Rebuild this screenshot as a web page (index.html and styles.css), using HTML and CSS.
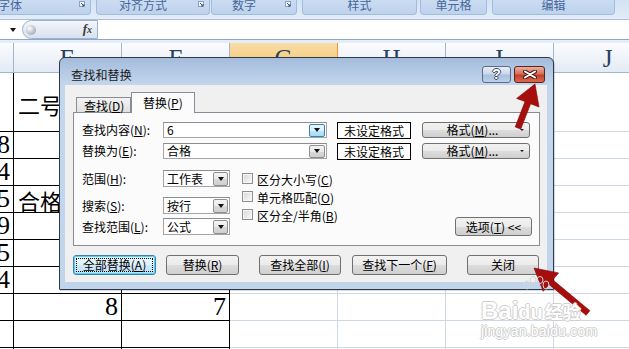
FILE: index.html
```html
<!DOCTYPE html>
<html lang="zh-CN">
<head>
    <meta charset="UTF-8">
    <meta name="viewport" content="width=device-width, initial-scale=1.0">
    <title>查找和替换</title>
    <link rel="stylesheet" href="styles.css">
</head>
<body>
    <!-- Ribbon group captions -->
    <div class="ribbon">
        <div class="group g1"><span class="glabel">字体</span><span class="launch"><svg width="6" height="6" viewBox="0 0 6 6"><rect x="0.5" y="0.5" width="5" height="5" fill="#eef4fb" stroke="#8aa3c4"/><path d="M2 2 L5 5 M5 3 V5 H3" stroke="#3d5a80" fill="none"/></svg></span></div>
        <div class="group g2"><span class="glabel">对齐方式</span><span class="launch"><svg width="6" height="6" viewBox="0 0 6 6"><rect x="0.5" y="0.5" width="5" height="5" fill="#eef4fb" stroke="#8aa3c4"/><path d="M2 2 L5 5 M5 3 V5 H3" stroke="#3d5a80" fill="none"/></svg></span></div>
        <div class="group g3"><span class="glabel">数字</span><span class="launch"><svg width="6" height="6" viewBox="0 0 6 6"><rect x="0.5" y="0.5" width="5" height="5" fill="#eef4fb" stroke="#8aa3c4"/><path d="M2 2 L5 5 M5 3 V5 H3" stroke="#3d5a80" fill="none"/></svg></span></div>
        <div class="group g4"><span class="glabel">样式</span></div>
        <div class="group g5"><span class="glabel">单元格</span></div>
        <div class="group g6"><span class="glabel">编辑</span></div>
    </div>

    <!-- Formula bar -->
    <div class="fbar">
        <div class="namebox"><span class="nb-arrow"></span></div>
        <div class="fxpill"><span class="ball"></span><span class="fx">f<i>x</i></span></div>
        <div class="finput"></div>
    </div>
    <div class="fgap"></div>

    <!-- Worksheet -->
    <table class="sheet">
        <colgroup>
            <col><col><col><col><col><col><col>
        </colgroup>
        <tr class="hdr">
            <th></th><th>E</th><th>F</th><th class="sel">G</th><th>H</th><th>I</th><th>J</th>
        </tr>
        <tr class="tall">
            <td class="k"></td><td class="k txt top">二号</td><td class="k"></td><td></td><td></td><td></td><td></td>
        </tr>
        <tr><td class="k num">8</td><td class="k"></td><td class="k"></td><td></td><td></td><td></td><td></td></tr>
        <tr><td class="k num">4</td><td class="k"></td><td class="k"></td><td></td><td></td><td></td><td></td></tr>
        <tr><td class="k num">5</td><td class="k txt">合格</td><td class="k"></td><td></td><td></td><td></td><td></td></tr>
        <tr><td class="k num">9</td><td class="k"></td><td class="k"></td><td></td><td></td><td></td><td></td></tr>
        <tr><td class="k num">5</td><td class="k"></td><td class="k"></td><td></td><td></td><td></td><td></td></tr>
        <tr><td class="k num">4</td><td class="k"></td><td class="k"></td><td></td><td></td><td></td><td></td></tr>
        <tr><td class="k"></td><td class="k num">8</td><td class="k num">7</td><td></td><td></td><td></td><td></td></tr>
        <tr><td class="k"></td><td class="k"></td><td class="k"></td><td></td><td></td><td></td><td></td></tr>
        <tr><td class="k"></td><td class="k"></td><td class="k"></td><td></td><td></td><td></td><td></td></tr>
    </table>

    <!-- Find and replace dialog -->
    <div class="dlg">
        <div class="titlebar">
            <span class="title">查找和替换</span>
            <span class="tbtn help">?</span>
            <span class="tbtn close"><svg width="14" height="9" viewBox="0 0 14 9"><path d="M2 1.5 L12 7.5 M12 1.5 L2 7.5" stroke="#4a1a14" stroke-width="4" stroke-linecap="round"/><path d="M2 1.5 L12 7.5 M12 1.5 L2 7.5" stroke="#fff" stroke-width="2" stroke-linecap="round"/></svg></span>
        </div>
        <div class="client">
            <div class="tabs">
                <span class="tab">查找(<u>D</u>)</span>
                <span class="tab on">替换(<u>P</u>)</span>
            </div>
            <div class="panel">
                <div class="frow">
                    <span class="lbl">查找内容(<u>N</u>):</span>
                    <div class="combo wide"><span class="val">6</span><span class="drop hot"></span></div>
                    <div class="fmtbox">未设定格式</div>
                    <div class="btn fmtbtn"><span class="btext">格式(<u>M</u>)...</span><span class="caret"></span></div>
                </div>
                <div class="frow second">
                    <span class="lbl">替换为(<u>E</u>):</span>
                    <div class="combo wide"><span class="val">合格</span><span class="drop"></span></div>
                    <div class="fmtbox">未设定格式</div>
                    <div class="btn fmtbtn"><span class="btext">格式(<u>M</u>)...</span><span class="caret"></span></div>
                </div>
                <div class="opts">
                    <div class="selcol">
                        <div class="srow">
                            <span class="lbl">范围(<u>H</u>):</span>
                            <div class="combo short"><span class="val">工作表</span><span class="drop"></span></div>
                        </div>
                        <div class="srow r2">
                            <span class="lbl">搜索(<u>S</u>):</span>
                            <div class="combo short"><span class="val">按行</span><span class="drop"></span></div>
                        </div>
                        <div class="srow r3">
                            <span class="lbl">查找范围(<u>L</u>):</span>
                            <div class="combo short"><span class="val">公式</span><span class="drop"></span></div>
                        </div>
                    </div>
                    <div class="checks">
                        <div class="chk"><span class="box"></span>区分大小写(<u>C</u>)</div>
                        <div class="chk"><span class="box"></span>单元格匹配(<u>O</u>)</div>
                        <div class="chk"><span class="box"></span>区分全/半角(<u>B</u>)</div>
                    </div>
                    <div class="btn optbtn">选项(<u>T</u>) &lt;&lt;</div>
                </div>
            </div>
            <div class="actions">
                <div class="btn act focus b1"><span class="dots">全部替换(<u>A</u>)</span></div>
                <div class="btn act b2">替换(<u>R</u>)</div>
                <div class="btn act b3">查找全部(<u>I</u>)</div>
                <div class="btn act b4">查找下一个(<u>F</u>)</div>
                <div class="btn act b5">关闭</div>
            </div>
        </div>
    </div>

    <!-- Annotation arrows -->
    <svg class="arrows" width="629" height="349" viewBox="0 0 629 349">
        <polygon points="535,84 539,107 530.6,103.8 520.8,129.1 515.2,126.9 525,101.6 516.6,98.4" fill="#a80d0d" stroke="#7a0505" stroke-width="0.6"/>
        <polygon points="534,268 558.6,272.9 552.8,279.8 589.9,310.7 586.1,315.3 549,284.4 543.2,291.3" fill="#a80d0d" stroke="#7a0505" stroke-width="0.6"/>
    </svg>

    <!-- Watermark -->
    <div class="wm">
        <svg class="paw" width="30" height="24" viewBox="0 0 30 24">
            <ellipse cx="6" cy="9" rx="3" ry="4" fill="none" stroke="#d6d6d6"/>
            <ellipse cx="12" cy="4" rx="3" ry="3.5" fill="none" stroke="#d6d6d6"/>
            <ellipse cx="19" cy="4" rx="3" ry="3.5" fill="none" stroke="#d6d6d6"/>
            <ellipse cx="25" cy="9" rx="3" ry="4" fill="none" stroke="#d6d6d6"/>
        </svg>
        <div class="wm-logo"><span>Bai</span><span class="du">du</span><span class="jy">经验</span></div>
        <div class="wm-url">jingyan.baidu.com</div>
    </div>
</body>
</html>
```

FILE: styles.css
```css
/* General */
* {
    box-sizing: border-box;
}

body {
    margin: 0;
    width: 629px;
    height: 349px;
    overflow: hidden;
    position: relative;
    background: #ffffff;
    font-family: "Noto Sans CJK SC", sans-serif;
    font-size: 12px;
    color: #000;
}

u {
    text-decoration: underline;
    text-underline-offset: 1px;
}

/* Ribbon captions */
.ribbon {
    display: flex;
    height: 19px;
    background: linear-gradient(#d3e2f4, #e3edf8);
}

.group {
    display: flex;
    height: 15px;
    background: linear-gradient(#cbdcf2, #bed2ec);
    border: 1px solid #a2bcdc;
    border-top: none;
    border-radius: 0 0 4px 4px;
    color: #46679a;
}

.glabel {
    flex: 1;
    text-align: center;
    line-height: 10px;
    font-size: 12px;
    white-space: nowrap;
}

.launch {
    width: 20px;
    display: flex;
    justify-content: flex-end;
    padding: 1px 5px 0 0;
}

.launch svg {
    display: block;
}

.g1 { margin-left: -51px; width: 142px; }
.g2 { margin-left: 5px; width: 114px; }
.g3 { margin-left: 1px; width: 86px; }
.g4 { margin-left: 5px; width: 115px; }
.g5 { margin-left: 3px; width: 67px; }
.g6 { margin-left: 5px; width: 123px; }

/* Formula bar */
.fbar {
    display: flex;
    align-items: center;
    height: 21px;
    background: #fff;
    border-top: 1px solid #a9bed8;
    border-bottom: 1px solid #8ca6c7;
}

.namebox {
    width: 22px;
    display: flex;
    justify-content: center;
    padding-left: 3px;
}

.nb-arrow {
    width: 0;
    height: 0;
    border-left: 3.5px solid transparent;
    border-right: 3.5px solid transparent;
    border-top: 4px solid #111;
}

.fxpill {
    display: flex;
    align-items: center;
    justify-content: space-between;
    width: 76px;
    height: 19px;
    border: 1px solid #9fb3cf;
    border-radius: 10px 0 0 10px;
    background: linear-gradient(#f4f7fb, #d7e1ee);
    padding: 0 5px 0 3px;
}

.ball {
    width: 10px;
    height: 10px;
    border-radius: 50%;
    background: radial-gradient(circle at 35% 35%, #ffffff, #a9b2bd 70%, #8e98a5);
}

.fx {
    font-family: "Liberation Serif", serif;
    font-style: italic;
    font-weight: bold;
    font-size: 13px;
    color: #3c3c3c;
    line-height: 14px;
}

.fx i {
    font-size: 10px;
}

.finput {
    flex: 1;
    height: 100%;
}

.fgap {
    height: 3px;
    background: #e6edf7;
}

/* Worksheet */
.sheet {
    margin-left: -95px;
    width: 756px;
    table-layout: fixed;
    border-collapse: collapse;
}

.sheet col {
    width: 108px;
}

.sheet th {
    height: 29px;
    padding: 3px 0 0;
    font-family: "Liberation Serif", serif;
    font-weight: normal;
    font-size: 25px;
    line-height: 26px;
    color: #28415e;
    background: linear-gradient(#fbfcfe, #e3eaf4);
    border-right: 1px solid #9eb6ce;
    border-bottom: 1px solid #9eb6ce;
    vertical-align: top;
}

.sheet th.sel {
    background: linear-gradient(#f9dca6, #f2c46c);
    border-left: 1px solid #f29536;
    border-right: 1px solid #f29536;
    border-bottom-color: #f29536;
}

.sheet tr {
    height: 27px;
}

.sheet tr.hdr {
    height: 29px;
}

.sheet tr.tall {
    height: 59px;
}

.sheet td {
    padding: 0;
    border: 1px solid #d0d7e5;
    vertical-align: bottom;
    overflow: hidden;
    white-space: nowrap;
}

.sheet td.k {
    border: 1px solid #000;
}

.sheet td.num {
    text-align: right;
    padding-right: 3px;
    font-family: "Liberation Serif", serif;
    font-size: 26px;
    line-height: 26px;
}

.sheet td.txt {
    padding-left: 4px;
    font-size: 22px;
    line-height: 24px;
}

.sheet td.top {
    padding-bottom: 15px;
}

/* Dialog window */
.dlg {
    position: absolute;
    left: 59px;
    top: 57px;
    width: 495px;
    height: 233px;
    border: 1px solid #2f3b4c;
    border-radius: 6px 6px 0 0;
    background: linear-gradient(#a4bcdb 0, #c3d6ed 27px, #c0d5ec 100%);
    box-shadow: 1px 1px 0 rgba(0, 0, 0, 0.15);
}

.titlebar {
    display: flex;
    align-items: flex-start;
    height: 27px;
    padding: 0 8px 0 11px;
}

.title {
    margin-top: 10px;
    line-height: 14px;
    color: #1b1b1b;
    letter-spacing: 0.2px;
}

.tbtn {
    margin-top: 8px;
    height: 17px;
    border-radius: 3px;
    display: flex;
    align-items: center;
    justify-content: center;
}

.help {
    margin-left: auto;
    width: 29px;
    border: 1px solid #5d6d86;
    background: linear-gradient(#e7eef7 0%, #c9d7ea 48%, #a9bfdc 52%, #bcd0ea 100%);
    font-family: "Liberation Sans", sans-serif;
    font-weight: bold;
    font-size: 14px;
    color: #fff;
    text-shadow: 1px 0 0 #3b4a60, -1px 0 0 #3b4a60, 0 1px 0 #3b4a60, 0 -1px 0 #3b4a60;
    line-height: 15px;
}

.close {
    margin-left: 3px;
    width: 31px;
    border: 1px solid #5e2218;
    background: linear-gradient(#eab0a2 0%, #d6705c 45%, #c1402a 55%, #d96a50 100%);
}

.client {
    margin: 0 6px 0 5px;
    height: 197px;
    background: #f0f0f0;
}

/* Tabs */
.tabs {
    display: flex;
    align-items: flex-end;
    height: 27px;
    padding-left: 11px;
}

.tab {
    width: 55px;
    height: 15px;
    padding: 0 0 0 7px;
    line-height: 15px;
    border: 1px solid #898c95;
    border-bottom: none;
    background: linear-gradient(#f3f3f3, #e1e1e1);
    white-space: nowrap;
}

.tab.on {
    width: 64px;
    height: 21px;
    margin-bottom: -1px;
    padding: 2px 0 0 11px;
    line-height: 16px;
    background: #fbfbfb;
    position: relative;
    z-index: 1;
}

.panel {
    margin-left: 8px;
    width: 467px;
    height: 134px;
    border: 1px solid #898c95;
    background: #fbfbfb;
    padding: 9px 0 0 8px;
}

.frow {
    display: flex;
    align-items: center;
    height: 16px;
}

.frow.second {
    margin-top: 5px;
}

.lbl {
    width: 81px;
    white-space: nowrap;
    line-height: 16px;
}

/* Combo boxes */
.combo {
    display: flex;
    align-items: center;
    height: 16px;
    background: #fff;
    border: 1px solid #a2a4a8;
    border-top-color: #8b8d92;
}

.combo.wide {
    width: 164px;
}

.combo.short {
    width: 67px;
    height: 17px;
}

.val {
    flex: 1;
    padding-left: 3px;
    line-height: 14px;
    white-space: nowrap;
}

.drop {
    width: 16px;
    height: 13px;
    margin-right: 1px;
    border: 1px solid #8f8f8f;
    border-radius: 2px;
    background: linear-gradient(#f4f4f4 0%, #e9e9e9 50%, #d9d9d9 51%, #cfcfcf 100%);
    display: flex;
    align-items: center;
    justify-content: center;
}

.combo.short .drop {
    width: 15px;
    height: 14px;
}

.drop::before {
    content: "";
    border-left: 3.5px solid transparent;
    border-right: 3.5px solid transparent;
    border-top: 4px solid #111;
}

.drop.hot {
    border-color: #3c7fb1;
    background: linear-gradient(#eaf6fd 0%, #d9f0fc 50%, #bee6fd 51%, #a7d9f5 100%);
}

.fmtbox {
    margin-left: 10px;
    width: 74px;
    height: 17px;
    border: 1px solid #000;
    background: #fff;
    text-align: center;
    line-height: 15px;
}

/* Buttons */
.btn {
    border: 1px solid #707070;
    border-radius: 3px;
    background: linear-gradient(#f2f2f2 0%, #ebebeb 50%, #dddddd 51%, #cfcfcf 100%);
    text-align: center;
    white-space: nowrap;
}

.fmtbtn {
    display: flex;
    align-items: center;
    margin-left: 11px;
    width: 108px;
    height: 16px;
    padding: 0 5px 0 2px;
}

.btext {
    flex: 1;
    line-height: 14px;
}

.caret {
    border-left: 2px solid transparent;
    border-right: 2px solid transparent;
    border-top: 2px solid #222;
}

/* Options block */
.opts {
    display: flex;
    align-items: flex-start;
    margin-top: 11px;
}

.srow {
    display: flex;
    align-items: center;
    height: 17px;
}

.srow.r2 {
    margin-top: 10px;
}

.srow.r3 {
    margin-top: 4px;
}

.checks {
    margin-left: 12px;
    margin-top: 1px;
    display: flex;
    flex-direction: column;
}

.chk {
    display: flex;
    align-items: center;
    height: 18px;
    line-height: 14px;
    white-space: nowrap;
}

.box {
    width: 11px;
    height: 11px;
    margin-right: 4px;
    border: 1px solid #8e8f8f;
    background: linear-gradient(135deg, #d6d6d6, #fbfbfb);
    box-shadow: inset 0 0 0 1px #f6f6f6;
    margin-top: -4px;
}

.optbtn {
    margin-left: auto;
    margin-right: 7px;
    margin-top: 47px;
    width: 77px;
    height: 19px;
    line-height: 17px;
}

/* Bottom action buttons */
.actions {
    display: flex;
    margin-top: 9px;
}

.act {
    height: 20px;
    line-height: 18px;
}

.b1 { margin-left: 8px; width: 83px; }
.b2 { margin-left: 10px; width: 73px; }
.b3 { margin-left: 20px; width: 82px; }
.b4 { margin-left: 11px; width: 95px; }
.b5 { margin-left: 20px; width: 72px; }

.act.focus {
    border-color: #3c7fb1;
    box-shadow: inset 0 0 0 1px #4fd1f9;
    background: linear-gradient(#eaf6fd 0%, #e1f1fb 50%, #cde8f8 51%, #c3e2f6 100%);
    padding: 2px;
}

.dots {
    display: block;
    height: 14px;
    line-height: 12px;
    border: 1px dotted #000;
}

/* Overlays */
.arrows {
    position: absolute;
    left: 0;
    top: 0;
}

.wm {
    position: absolute;
    left: 481px;
    top: 276px;
    width: 115px;
    color: #fff;
    text-shadow: 1px 0 0 #cfcfcf, -1px 0 0 #cfcfcf, 0 1px 0 #cfcfcf, 0 -1px 0 #cfcfcf;
    font-family: "Liberation Sans", sans-serif;
}

.paw {
    display: block;
    margin-left: 40px;
}

.wm-logo {
    display: flex;
    align-items: baseline;
    font-weight: bold;
    font-size: 24px;
    line-height: 22px;
}

.du {
    font-size: 20px;
}

.jy {
    margin-left: 2px;
    font-family: "Noto Sans CJK SC", sans-serif;
    font-size: 18px;
}

.wm-url {
    font-size: 14px;
    line-height: 16px;
    letter-spacing: 0.2px;
}
```
